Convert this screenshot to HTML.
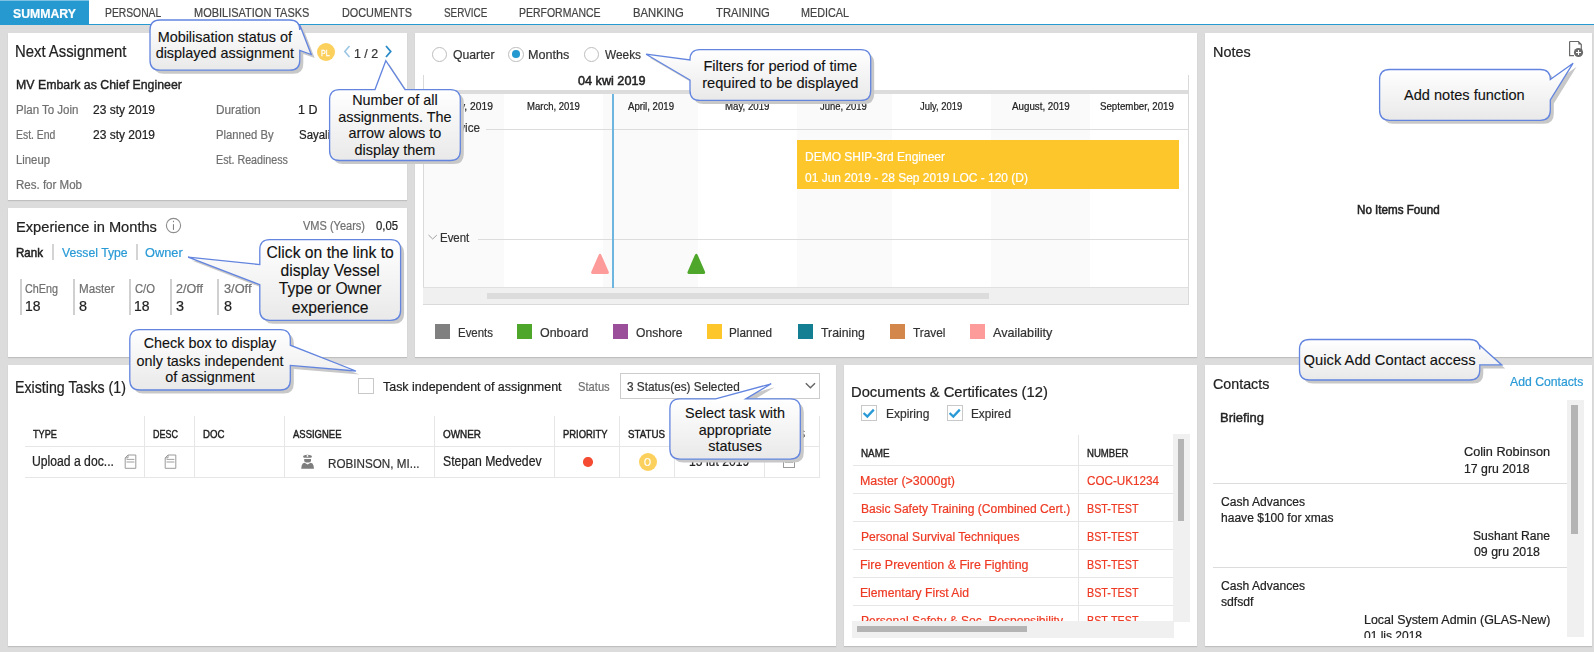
<!DOCTYPE html><html><head><meta charset="utf-8"><style>html,body{margin:0;padding:0;}body{width:1594px;height:652px;overflow:hidden;position:relative;background:#dcdcdc;font-family:"Liberation Sans",sans-serif;}.t{position:absolute;white-space:nowrap;line-height:1;transform-origin:0 0;-webkit-text-stroke-width:0.22px;}.r{position:absolute;}</style></head><body><div class="r" style="left:0.00px;top:0.00px;width:1594.00px;height:24.00px;background:#ffffff;z-index:0;"></div>
<div class="r" style="left:0.00px;top:24.00px;width:1594.00px;height:1.20px;background:#2699d0;z-index:0;"></div>
<div class="r" style="left:0.00px;top:0.00px;width:89.00px;height:24.00px;background:#2699d0;z-index:0;"></div>
<div class="r" style="left:0.00px;top:0.00px;width:89.00px;height:1.00px;background:#7dc1e5;z-index:0;"></div>
<div class="t" style="left:12.65px;top:7.00px;font-size:13.37px;color:#ffffff;font-weight:bold;transform:scaleX(0.9185);">SUMMARY</div>
<div class="t" style="left:104.65px;top:6.00px;font-size:13.37px;color:#444444;transform:scaleX(0.7730);">PERSONAL</div>
<div class="t" style="left:193.80px;top:6.00px;font-size:13.37px;color:#444444;transform:scaleX(0.8224);">MOBILISATION TASKS</div>
<div class="t" style="left:341.91px;top:6.00px;font-size:13.37px;color:#444444;transform:scaleX(0.8123);">DOCUMENTS</div>
<div class="t" style="left:444.05px;top:6.00px;font-size:13.37px;color:#444444;transform:scaleX(0.7406);">SERVICE</div>
<div class="t" style="left:519.24px;top:6.00px;font-size:13.37px;color:#444444;transform:scaleX(0.7845);">PERFORMANCE</div>
<div class="t" style="left:632.77px;top:6.00px;font-size:13.37px;color:#444444;transform:scaleX(0.8440);">BANKING</div>
<div class="t" style="left:715.95px;top:6.00px;font-size:13.37px;color:#444444;transform:scaleX(0.8436);">TRAINING</div>
<div class="t" style="left:801.21px;top:6.00px;font-size:13.37px;color:#444444;transform:scaleX(0.8075);">MEDICAL</div>
<div class="r" style="left:8.00px;top:33.00px;width:399.00px;height:167.00px;background:#ffffff;z-index:0;box-shadow:0 1px 1px rgba(0,0,0,0.13);"></div>
<div class="r" style="left:8.00px;top:208.00px;width:399.00px;height:149.00px;background:#ffffff;z-index:0;box-shadow:0 1px 1px rgba(0,0,0,0.13);"></div>
<div class="r" style="left:415.00px;top:33.00px;width:782.00px;height:324.00px;background:#ffffff;z-index:0;box-shadow:0 1px 1px rgba(0,0,0,0.13);"></div>
<div class="r" style="left:1205.00px;top:33.00px;width:387.00px;height:324.00px;background:#ffffff;z-index:0;box-shadow:0 1px 1px rgba(0,0,0,0.13);"></div>
<div class="r" style="left:8.00px;top:365.00px;width:828.00px;height:281.00px;background:#ffffff;z-index:0;box-shadow:0 1px 1px rgba(0,0,0,0.13);"></div>
<div class="r" style="left:844.00px;top:365.00px;width:353.00px;height:281.00px;background:#ffffff;z-index:0;box-shadow:0 1px 1px rgba(0,0,0,0.13);"></div>
<div class="r" style="left:1205.00px;top:365.00px;width:387.00px;height:281.00px;background:#ffffff;z-index:0;box-shadow:0 1px 1px rgba(0,0,0,0.13);"></div>
<div class="t" style="left:15.38px;top:44.00px;font-size:15.99px;color:#222222;transform:scaleX(0.9294);">Next Assignment</div>
<div class="r" style="left:317px;top:43px;width:18px;height:18px;border-radius:50%;background:#fcd05c;"></div>
<div class="t" style="left:321.12px;top:48.00px;font-size:9.74px;color:#ffffff;transform:scaleX(0.7304);-webkit-text-stroke-width:0.3px;">PL</div>
<svg class="r" style="left:0;top:0;" width="420" height="70"><path d="M349.5,46 L344.8,51.5 L349.5,57" fill="none" stroke="#9cc7e4" stroke-width="1.6"/><path d="M386,46 L390.7,51.5 L386,57" fill="none" stroke="#2a8ac8" stroke-width="1.8"/></svg>
<div class="t" style="left:354.36px;top:47.00px;font-size:13.52px;color:#333333;transform:scaleX(0.9163);">1 / 2</div>
<div class="t" style="left:15.59px;top:78.00px;font-size:13.23px;color:#222222;transform:scaleX(0.9331);-webkit-text-stroke-width:0.4px;">MV Embark as Chief Engineer</div>
<div class="t" style="left:15.56px;top:104.00px;font-size:12.21px;color:#707070;transform:scaleX(0.9428);">Plan To Join</div>
<div class="t" style="left:93.00px;top:104.00px;font-size:12.50px;color:#222222;transform:scaleX(0.9593);">23 sty 2019</div>
<div class="t" style="left:15.64px;top:129.00px;font-size:12.21px;color:#707070;transform:scaleX(0.8538);">Est. End</div>
<div class="t" style="left:93.00px;top:129.00px;font-size:12.50px;color:#222222;transform:scaleX(0.9593);">23 sty 2019</div>
<div class="t" style="left:15.57px;top:154.00px;font-size:12.21px;color:#707070;transform:scaleX(0.9273);">Lineup</div>
<div class="t" style="left:15.55px;top:179.00px;font-size:12.21px;color:#707070;transform:scaleX(0.9444);">Res. for Mob</div>
<div class="t" style="left:215.63px;top:104.00px;font-size:12.21px;color:#707070;transform:scaleX(0.9686);">Duration</div>
<div class="t" style="left:298.45px;top:104.00px;font-size:12.50px;color:#222222;transform:scaleX(0.9973);">1 D</div>
<div class="t" style="left:215.68px;top:129.00px;font-size:12.21px;color:#707070;transform:scaleX(0.9223);">Planned By</div>
<div class="t" style="left:298.88px;top:129.00px;font-size:12.50px;color:#222222;transform:scaleX(0.9157);">Sayali Shinde</div>
<div class="t" style="left:215.72px;top:154.00px;font-size:12.21px;color:#707070;transform:scaleX(0.8768);">Est. Readiness</div>
<div class="t" style="left:15.60px;top:219.00px;font-size:15.55px;color:#222222;transform:scaleX(0.9428);">Experience in Months</div>
<svg class="r" style="left:160px;top:212px;" width="28" height="28"><circle cx="13.5" cy="13.5" r="7.1" fill="none" stroke="#8d8d8d" stroke-width="1.1"/><path d="M13.45,12.2 L13.45,17.9 M13.45,8.8 L13.45,10.2" stroke="#7a7a7a" stroke-width="1"/></svg>
<div class="t" style="left:303.35px;top:220.00px;font-size:12.50px;color:#707070;transform:scaleX(0.8807);">VMS (Years)</div>
<div class="t" style="left:375.86px;top:220.00px;font-size:12.79px;color:#222222;transform:scaleX(0.8877);">0,05</div>
<div class="t" style="left:15.85px;top:246.00px;font-size:13.37px;color:#222222;transform:scaleX(0.8649);-webkit-text-stroke-width:0.55px;">Rank</div>
<div class="r" style="left:52.00px;top:244.00px;width:2.00px;height:16.40px;background:#d4d4d4;z-index:0;"></div>
<div class="t" style="left:62.25px;top:246.00px;font-size:13.37px;color:#2a9ad6;transform:scaleX(0.9142);">Vessel Type</div>
<div class="r" style="left:136.00px;top:244.00px;width:2.00px;height:16.40px;background:#d4d4d4;z-index:0;"></div>
<div class="t" style="left:145.39px;top:246.00px;font-size:13.37px;color:#2a9ad6;transform:scaleX(0.9572);">Owner</div>
<div class="r" style="left:19.90px;top:278.80px;width:2.00px;height:35.90px;background:#d0d0d0;z-index:0;"></div>
<div class="t" style="left:25.45px;top:283.00px;font-size:12.50px;color:#707070;transform:scaleX(0.8634);">ChEng</div>
<div class="t" style="left:24.94px;top:298.00px;font-size:15.26px;color:#222222;transform:scaleX(0.9130);">18</div>
<div class="r" style="left:72.70px;top:278.80px;width:2.00px;height:35.90px;background:#d0d0d0;z-index:0;"></div>
<div class="t" style="left:78.85px;top:283.00px;font-size:12.50px;color:#707070;transform:scaleX(0.9292);">Master</div>
<div class="t" style="left:78.77px;top:298.00px;font-size:15.26px;color:#222222;transform:scaleX(0.9425);">8</div>
<div class="r" style="left:128.80px;top:278.80px;width:2.00px;height:35.90px;background:#d0d0d0;z-index:0;"></div>
<div class="t" style="left:134.73px;top:283.00px;font-size:12.50px;color:#707070;transform:scaleX(0.9000);">C/O</div>
<div class="t" style="left:134.24px;top:298.00px;font-size:15.26px;color:#222222;transform:scaleX(0.9130);">18</div>
<div class="r" style="left:169.80px;top:278.80px;width:2.00px;height:35.90px;background:#d0d0d0;z-index:0;"></div>
<div class="t" style="left:176.07px;top:283.00px;font-size:12.50px;color:#707070;transform:scaleX(1.0049);">2/Off</div>
<div class="t" style="left:175.85px;top:298.00px;font-size:15.26px;color:#222222;transform:scaleX(0.9425);">3</div>
<div class="r" style="left:217.40px;top:278.80px;width:2.00px;height:35.90px;background:#d0d0d0;z-index:0;"></div>
<div class="t" style="left:224.01px;top:283.00px;font-size:12.50px;color:#707070;transform:scaleX(1.0236);">3/Off</div>
<div class="t" style="left:223.87px;top:298.00px;font-size:15.26px;color:#222222;transform:scaleX(0.9425);">8</div>
<div class="r" style="left:432.10px;top:46.50px;width:13.4px;height:13.4px;border-radius:50%;border:1px solid #bdbdbd;background:#fff;"></div>
<div class="t" style="left:452.72px;top:48.00px;font-size:13.37px;color:#333333;transform:scaleX(0.9154);">Quarter</div>
<div class="r" style="left:508.20px;top:46.50px;width:13.4px;height:13.4px;border-radius:50%;border:1px solid #bdbdbd;background:#fff;"></div>
<div class="t" style="left:528.26px;top:48.00px;font-size:13.37px;color:#333333;transform:scaleX(0.9441);">Months</div>
<div class="r" style="left:584.10px;top:46.50px;width:13.4px;height:13.4px;border-radius:50%;border:1px solid #bdbdbd;background:#fff;"></div>
<div class="t" style="left:605.15px;top:48.00px;font-size:13.37px;color:#333333;transform:scaleX(0.8861);">Weeks</div>
<div class="r" style="left:512.1px;top:50.4px;width:7.6px;height:7.6px;border-radius:50%;background:#2699d0;"></div>
<div class="r" style="left:423.00px;top:94.00px;width:765.00px;height:193.60px;background:#ffffff;z-index:0;"></div>
<div class="r" style="left:423.00px;top:94.00px;width:81.00px;height:193.60px;background:#fafafa;z-index:0;"></div>
<div class="r" style="left:603.00px;top:94.00px;width:95.00px;height:193.60px;background:#fafafa;z-index:0;"></div>
<div class="r" style="left:797.00px;top:94.00px;width:95.00px;height:193.60px;background:#fafafa;z-index:0;"></div>
<div class="r" style="left:991.00px;top:94.00px;width:99.00px;height:193.60px;background:#fafafa;z-index:0;"></div>
<div class="r" style="left:423.00px;top:90.00px;width:765.50px;height:4.00px;background:#dcdcdc;z-index:0;"></div>
<div class="r" style="left:422.50px;top:75.00px;width:1.20px;height:230.00px;background:#dadada;z-index:0;"></div>
<div class="r" style="left:1188.00px;top:75.00px;width:1.20px;height:230.00px;background:#dadada;z-index:0;"></div>
<div class="r" style="left:423.00px;top:287.60px;width:765.00px;height:16.90px;background:#f0f0f0;z-index:0;"></div>
<div class="r" style="left:423.00px;top:287.00px;width:765.00px;height:1.00px;background:#e0e0e0;z-index:0;"></div>
<div class="r" style="left:422.50px;top:304.00px;width:766.70px;height:1.20px;background:#dadada;z-index:0;"></div>
<div class="r" style="left:486.60px;top:292.70px;width:502.40px;height:6.10px;background:#dcdcdc;z-index:0;"></div>
<div class="t" style="left:577.81px;top:74.00px;font-size:13.08px;color:#222222;transform:scaleX(0.9668);-webkit-text-stroke-width:0.5px;">04 kwi 2019</div>
<div class="t" style="left:424.16px;top:102.00px;font-size:10.17px;color:#222222;transform:scaleX(1.0110);">February, 2019</div>
<div class="t" style="left:526.92px;top:102.00px;font-size:10.17px;color:#222222;transform:scaleX(0.9371);">March, 2019</div>
<div class="t" style="left:627.58px;top:102.00px;font-size:10.17px;color:#222222;transform:scaleX(0.9477);">April, 2019</div>
<div class="t" style="left:724.71px;top:102.00px;font-size:10.17px;color:#222222;transform:scaleX(0.9518);">May, 2019</div>
<div class="t" style="left:820.35px;top:102.00px;font-size:10.17px;color:#222222;transform:scaleX(0.9295);">June, 2019</div>
<div class="t" style="left:919.85px;top:102.00px;font-size:10.17px;color:#222222;transform:scaleX(0.9271);">July, 2019</div>
<div class="t" style="left:1011.98px;top:102.00px;font-size:10.17px;color:#222222;transform:scaleX(0.9622);">August, 2019</div>
<div class="t" style="left:1099.96px;top:102.00px;font-size:10.17px;color:#222222;transform:scaleX(0.9549);">September, 2019</div>
<svg class="r" style="left:0;top:0;" width="600" height="260"><path d="M428.5,125 L432.7,129 L436.9,125" fill="none" stroke="#a0a0a0" stroke-width="1"/><path d="M428.5,235 L432.7,239 L436.9,235" fill="none" stroke="#a0a0a0" stroke-width="1"/></svg>
<div class="t" style="left:440.87px;top:121.00px;font-size:13.08px;color:#333333;transform:scaleX(0.8941);">Service</div>
<div class="r" style="left:486.00px;top:129.00px;width:702.00px;height:1.20px;background:#dcdcdc;z-index:0;"></div>
<div class="t" style="left:440.46px;top:231.00px;font-size:13.08px;color:#333333;transform:scaleX(0.8759);">Event</div>
<div class="r" style="left:477.50px;top:238.80px;width:710.50px;height:1.20px;background:#dcdcdc;z-index:0;"></div>
<div class="r" style="left:797.00px;top:139.50px;width:382.00px;height:49.50px;background:#fdc62b;z-index:0;"></div>
<div class="t" style="left:804.52px;top:150.00px;font-size:13.52px;color:#ffffff;transform:scaleX(0.8874);">DEMO SHIP-3rd Engineer</div>
<div class="t" style="left:805.03px;top:171.00px;font-size:13.52px;color:#ffffff;transform:scaleX(0.8859);">01 Jun 2019 - 28 Sep 2019 LOC - 120 (D)</div>
<div class="r" style="left:612.00px;top:94.00px;width:1.60px;height:193.60px;background:#6cb6df;z-index:0;"></div>
<svg class="r" style="left:0;top:0;" width="800" height="300"><path d="M598.6,255 Q600,252.6 601.4,255 L608.6,271.4 Q609.6,274 607,274 L593,274 Q590.4,274 591.4,271.4 Z" fill="#fd9a9a"/><path d="M694.9,255 Q696.3,252.6 697.7,255 L704.9,271.4 Q705.9,274 703.3,274 L689.3,274 Q686.7,274 687.7,271.4 Z" fill="#4ea62a"/></svg>
<div class="r" style="left:434.90px;top:324.00px;width:15.00px;height:15.20px;background:#808080;z-index:0;"></div>
<div class="t" style="left:458.26px;top:326.00px;font-size:13.37px;color:#333333;transform:scaleX(0.8561);">Events</div>
<div class="r" style="left:517.20px;top:324.00px;width:15.00px;height:15.20px;background:#4ea62a;z-index:0;"></div>
<div class="t" style="left:539.81px;top:326.00px;font-size:13.37px;color:#333333;transform:scaleX(0.9320);">Onboard</div>
<div class="r" style="left:613.00px;top:324.00px;width:15.00px;height:15.20px;background:#9b4f9b;z-index:0;"></div>
<div class="t" style="left:635.93px;top:326.00px;font-size:13.37px;color:#333333;transform:scaleX(0.9066);">Onshore</div>
<div class="r" style="left:707.00px;top:324.00px;width:15.00px;height:15.20px;background:#fdc62b;z-index:0;"></div>
<div class="t" style="left:729.44px;top:326.00px;font-size:13.37px;color:#333333;transform:scaleX(0.8762);">Planned</div>
<div class="r" style="left:798.10px;top:324.00px;width:15.00px;height:15.20px;background:#147f93;z-index:0;"></div>
<div class="t" style="left:821.22px;top:326.00px;font-size:13.37px;color:#333333;transform:scaleX(0.9202);">Training</div>
<div class="r" style="left:890.30px;top:324.00px;width:15.00px;height:15.20px;background:#d4874a;z-index:0;"></div>
<div class="t" style="left:913.03px;top:326.00px;font-size:13.37px;color:#333333;transform:scaleX(0.8866);">Travel</div>
<div class="r" style="left:969.90px;top:324.00px;width:15.00px;height:15.20px;background:#fd9a9a;z-index:0;"></div>
<div class="t" style="left:993.38px;top:326.00px;font-size:13.37px;color:#333333;transform:scaleX(0.9439);">Availability</div>
<div class="t" style="left:1212.92px;top:44.00px;font-size:15.41px;color:#222222;transform:scaleX(0.9342);">Notes</div>
<svg class="r" style="left:1560px;top:36px;" width="30" height="28"><path d="M9.6,5.5 L18.4,5.5 L21.3,8.5 L21.3,14" fill="none" stroke="#6a6a6a" stroke-width="1.2"/><path d="M9.6,5.5 L9.6,19.6 L14,19.6" fill="none" stroke="#6a6a6a" stroke-width="1.2"/><path d="M18.4,5.5 L18.4,8.5 L21.3,8.5 Z" fill="#6a6a6a"/><circle cx="18.5" cy="16.5" r="4.6" fill="#6a6a6a"/><path d="M18.5,14 L18.5,19 M16,16.5 L21,16.5" stroke="#fff" stroke-width="1.1"/></svg>
<div class="t" style="left:1356.75px;top:204.00px;font-size:12.79px;color:#222222;transform:scaleX(0.9099);-webkit-text-stroke-width:0.55px;">No Items Found</div>
<div class="t" style="left:15.34px;top:380.00px;font-size:15.99px;color:#222222;transform:scaleX(0.8881);">Existing Tasks (1)</div>
<div class="r" style="left:358px;top:378.2px;width:13.8px;height:13.8px;border:1px solid #c8c8c8;background:#fff;"></div>
<div class="t" style="left:382.82px;top:380.00px;font-size:13.37px;color:#222222;transform:scaleX(0.9317);">Task independent of assignment</div>
<div class="t" style="left:577.69px;top:381.00px;font-size:12.79px;color:#707070;transform:scaleX(0.8742);">Status</div>
<div class="r" style="left:620.2px;top:373px;width:197.8px;height:23.6px;border:1px solid #cccccc;background:#fff;"></div>
<div class="t" style="left:627.25px;top:380.00px;font-size:13.37px;color:#333333;transform:scaleX(0.8823);">3 Status(es) Selected</div>
<svg class="r" style="left:0;top:0;" width="840" height="400"><path d="M805.8,383.2 L810.4,387.8 L815,383.2" fill="none" stroke="#666" stroke-width="1.4"/></svg>
<div class="r" style="left:144.00px;top:416.00px;width:1.00px;height:62.00px;background:#e6e6e6;z-index:0;"></div>
<div class="r" style="left:194.00px;top:416.00px;width:1.00px;height:62.00px;background:#e6e6e6;z-index:0;"></div>
<div class="r" style="left:284.00px;top:416.00px;width:1.00px;height:62.00px;background:#e6e6e6;z-index:0;"></div>
<div class="r" style="left:434.00px;top:416.00px;width:1.00px;height:62.00px;background:#e6e6e6;z-index:0;"></div>
<div class="r" style="left:554.00px;top:416.00px;width:1.00px;height:62.00px;background:#e6e6e6;z-index:0;"></div>
<div class="r" style="left:619.00px;top:416.00px;width:1.00px;height:62.00px;background:#e6e6e6;z-index:0;"></div>
<div class="r" style="left:674.00px;top:416.00px;width:1.00px;height:62.00px;background:#e6e6e6;z-index:0;"></div>
<div class="r" style="left:764.00px;top:416.00px;width:1.00px;height:62.00px;background:#e6e6e6;z-index:0;"></div>
<div class="r" style="left:25.00px;top:446.00px;width:795.00px;height:1.00px;background:#e6e6e6;z-index:0;"></div>
<div class="r" style="left:25.00px;top:477.00px;width:795.00px;height:1.00px;background:#e6e6e6;z-index:0;"></div>
<div class="t" style="left:33.19px;top:428.00px;font-size:11.63px;color:#222222;transform:scaleX(0.7902);-webkit-text-stroke-width:0.45px;">TYPE</div>
<div class="t" style="left:152.56px;top:428.00px;font-size:11.63px;color:#222222;transform:scaleX(0.7738);-webkit-text-stroke-width:0.45px;">DESC</div>
<div class="t" style="left:202.91px;top:428.00px;font-size:11.63px;color:#222222;transform:scaleX(0.8321);-webkit-text-stroke-width:0.45px;">DOC</div>
<div class="t" style="left:293.18px;top:428.00px;font-size:11.63px;color:#222222;transform:scaleX(0.8158);-webkit-text-stroke-width:0.45px;">ASSIGNEE</div>
<div class="t" style="left:442.93px;top:428.00px;font-size:11.63px;color:#222222;transform:scaleX(0.8526);-webkit-text-stroke-width:0.45px;">OWNER</div>
<div class="t" style="left:562.83px;top:428.00px;font-size:11.63px;color:#222222;transform:scaleX(0.8103);-webkit-text-stroke-width:0.45px;">PRIORITY</div>
<div class="t" style="left:627.66px;top:428.00px;font-size:11.63px;color:#222222;transform:scaleX(0.8381);-webkit-text-stroke-width:0.45px;">STATUS</div>
<div class="t" style="left:682.18px;top:428.00px;font-size:11.63px;color:#222222;transform:scaleX(0.8631);-webkit-text-stroke-width:0.45px;">DUE DATE</div>
<div class="t" style="left:775.15px;top:428.00px;font-size:11.63px;color:#222222;transform:scaleX(0.8930);-webkit-text-stroke-width:0.45px;">DOCS</div>
<div class="t" style="left:32.46px;top:455.00px;font-size:13.95px;color:#222222;transform:scaleX(0.8736);">Upload a doc...</div>
<svg class="r" style="left:123.5px;top:454px;" width="14" height="16"><path d="M4,1 L11.8,1 L11.8,14.3 L1.2,14.3 L1.2,3.8 Z" fill="#fff" stroke="#9a9a9a" stroke-width="1"/><path d="M1.2,3.8 L4,3.8 L4,1" fill="none" stroke="#9a9a9a" stroke-width="1"/><path d="M2.5,5.4 L10.4,5.4" stroke="#8a8a8a" stroke-width="0.8"/><path d="M2.5,8 L10.4,8" stroke="#c4c4c4" stroke-width="1.6"/></svg>
<svg class="r" style="left:163.5px;top:454px;" width="14" height="16"><path d="M4,1 L11.8,1 L11.8,14.3 L1.2,14.3 L1.2,3.8 Z" fill="#fff" stroke="#9a9a9a" stroke-width="1"/><path d="M1.2,3.8 L4,3.8 L4,1" fill="none" stroke="#9a9a9a" stroke-width="1"/><path d="M2.5,5.4 L10.4,5.4" stroke="#8a8a8a" stroke-width="0.8"/><path d="M2.5,8 L10.4,8" stroke="#c4c4c4" stroke-width="1.6"/></svg>
<svg class="r" style="left:300px;top:452px;" width="16" height="18"><path d="M3,3.9 Q7.5,1.4 12,3.9 L11.3,5.8 L3.7,5.8 Z" fill="#7d7d7d"/><circle cx="7.5" cy="3.9" r="0.9" fill="#fff"/><path d="M4.2,6.9 L11,6.9 L11,8.4 Q11,10.5 7.6,10.5 Q4.2,10.5 4.2,8.4 Z" fill="#7d7d7d"/><path d="M1.2,16.7 L1.7,13.6 Q2.3,11.1 4.6,10.8 L7.6,12.6 L10.6,10.8 Q12.9,11.1 13.5,13.6 L14,16.7 Z" fill="#7d7d7d"/></svg>
<div class="t" style="left:328.34px;top:457.00px;font-size:13.37px;color:#333333;transform:scaleX(0.8735);">ROBINSON, MI...</div>
<div class="t" style="left:442.84px;top:454.00px;font-size:14.10px;color:#222222;transform:scaleX(0.8675);">Stepan Medvedev</div>
<div class="r" style="left:583.3px;top:457.3px;width:9.4px;height:9.4px;border-radius:50%;background:#f44b32;"></div>
<div class="r" style="left:638.5px;top:452.6px;width:18.8px;height:18.8px;border-radius:50%;background:#fcd05c;"></div>
<div class="t" style="left:644.17px;top:458.00px;font-size:10.17px;color:#ffffff;transform:scaleX(0.8845);">O</div>
<div class="t" style="left:689.27px;top:455.00px;font-size:13.95px;color:#222222;transform:scaleX(0.8732);">15 lut 2019</div>
<div class="r" style="left:783.2px;top:458.7px;width:9.6px;height:7.8px;border:1px solid #9a9a9a;background:#fff;"></div>
<div class="r" style="left:785.00px;top:461.00px;width:7.80px;height:1.60px;background:#b0b0b0;z-index:0;"></div>
<div class="r" style="left:819.00px;top:416.00px;width:1.00px;height:62.00px;background:#e6e6e6;z-index:0;"></div>
<div class="t" style="left:851.19px;top:384.00px;font-size:15.26px;color:#222222;transform:scaleX(0.9678);">Documents &amp; Certificates (12)</div>
<div class="r" style="left:860.9px;top:405.1px;width:14px;height:13.5px;border:1px solid #c8c8c8;background:#fff;"></div>
<svg class="r" style="left:860.9px;top:405.1px;" width="16" height="16"><path d="M2.6,8 L6.3,11.6 L12.8,4.6" fill="none" stroke="#2a9ad6" stroke-width="2.3"/></svg>
<div class="r" style="left:947px;top:405.1px;width:14px;height:13.5px;border:1px solid #c8c8c8;background:#fff;"></div>
<svg class="r" style="left:947px;top:405.1px;" width="16" height="16"><path d="M2.6,8 L6.3,11.6 L12.8,4.6" fill="none" stroke="#2a9ad6" stroke-width="2.3"/></svg>
<div class="t" style="left:885.81px;top:407.00px;font-size:13.08px;color:#333333;transform:scaleX(0.9183);">Expiring</div>
<div class="t" style="left:971.33px;top:407.00px;font-size:13.08px;color:#333333;transform:scaleX(0.9018);">Expired</div>
<div class="r" style="left:852.8px;top:435px;width:320px;height:186px;overflow:hidden;background:#fff;">
<div class="t" style="left:7.79px;top:13.00px;font-size:11.05px;color:#222222;transform:scaleX(0.8930);-webkit-text-stroke-width:0.4px;">NAME</div>
<div class="t" style="left:233.91px;top:13.00px;font-size:11.05px;color:#222222;transform:scaleX(0.8669);-webkit-text-stroke-width:0.4px;">NUMBER</div>
<div class="r" style="left:225.2px;top:0;width:1px;height:186px;background:#e6e6e6;"></div>
<div class="r" style="left:0;top:30px;width:320px;height:1px;background:#e6e6e6;"></div>
<div class="t" style="left:7.68px;top:39.00px;font-size:13.08px;color:#ee3a24;transform:scaleX(0.9502);">Master (&gt;3000gt)</div>
<div class="t" style="left:234.11px;top:39.00px;font-size:13.08px;color:#ee3a24;transform:scaleX(0.8922);">COC-UK1234</div>
<div class="r" style="left:0;top:58px;width:320px;height:1px;background:#e6e6e6;"></div>
<div class="t" style="left:7.71px;top:67.00px;font-size:13.08px;color:#ee3a24;transform:scaleX(0.9227);">Basic Safety Training (Combined Cert.)</div>
<div class="t" style="left:233.82px;top:67.00px;font-size:13.08px;color:#ee3a24;transform:scaleX(0.8239);">BST-TEST</div>
<div class="r" style="left:0;top:86px;width:320px;height:1px;background:#e6e6e6;"></div>
<div class="t" style="left:7.71px;top:95.00px;font-size:13.08px;color:#ee3a24;transform:scaleX(0.9249);">Personal Survival Techniques</div>
<div class="t" style="left:233.82px;top:95.00px;font-size:13.08px;color:#ee3a24;transform:scaleX(0.8239);">BST-TEST</div>
<div class="r" style="left:0;top:114px;width:320px;height:1px;background:#e6e6e6;"></div>
<div class="t" style="left:7.68px;top:123.00px;font-size:13.08px;color:#ee3a24;transform:scaleX(0.9498);">Fire Prevention &amp; Fire Fighting</div>
<div class="t" style="left:233.82px;top:123.00px;font-size:13.08px;color:#ee3a24;transform:scaleX(0.8239);">BST-TEST</div>
<div class="r" style="left:0;top:142px;width:320px;height:1px;background:#e6e6e6;"></div>
<div class="t" style="left:7.70px;top:151.00px;font-size:13.08px;color:#ee3a24;transform:scaleX(0.9313);">Elementary First Aid</div>
<div class="t" style="left:233.82px;top:151.00px;font-size:13.08px;color:#ee3a24;transform:scaleX(0.8239);">BST-TEST</div>
<div class="r" style="left:0;top:170px;width:320px;height:1px;background:#e6e6e6;"></div>
<div class="t" style="left:7.71px;top:179.00px;font-size:13.08px;color:#ee3a24;transform:scaleX(0.9230);">Personal Safety &amp; Soc. Responsibility</div>
<div class="t" style="left:233.82px;top:179.00px;font-size:13.08px;color:#ee3a24;transform:scaleX(0.8239);">BST-TEST</div>
</div>
<div class="r" style="left:1172.70px;top:434.10px;width:17.30px;height:187.70px;background:#f0f0f0;z-index:0;"></div>
<div class="r" style="left:1178.00px;top:439.20px;width:6.00px;height:81.80px;background:#b4b4b4;z-index:0;"></div>
<div class="r" style="left:852.20px;top:621.00px;width:321.80px;height:16.80px;background:#f0f0f0;z-index:0;"></div>
<div class="r" style="left:857.00px;top:626.20px;width:170.00px;height:5.80px;background:#b4b4b4;z-index:0;"></div>
<div class="t" style="left:1212.88px;top:377.00px;font-size:14.97px;color:#222222;transform:scaleX(0.9529);">Contacts</div>
<div class="t" style="left:1510.28px;top:375.00px;font-size:13.37px;color:#2a9ad6;transform:scaleX(0.9143);">Add Contacts</div>
<div class="r" style="left:1566.60px;top:399.70px;width:17.60px;height:237.70px;background:#f0f0f0;z-index:0;"></div>
<div class="r" style="left:1571.30px;top:404.80px;width:7.00px;height:129.00px;background:#b4b4b4;z-index:0;"></div>
<div class="r" style="left:1212.8px;top:399.7px;width:353.8px;height:238.6px;overflow:hidden;">
<div class="t" style="left:7.54px;top:12.00px;font-size:12.79px;color:#222222;transform:scaleX(1.0145);-webkit-text-stroke-width:0.4px;">Briefing</div>
<div class="t" style="left:251.56px;top:45.00px;font-size:13.08px;color:#222222;transform:scaleX(0.9694);">Colin Robinson</div>
<div class="t" style="left:251.26px;top:62.00px;font-size:13.08px;color:#222222;transform:scaleX(0.9394);">17 gru 2018</div>
<div class="r" style="left:0;top:83.30px;width:353.8px;height:1px;background:#dcdcdc;"></div>
<div class="t" style="left:7.99px;top:95.00px;font-size:13.08px;color:#222222;transform:scaleX(0.9241);">Cash Advances</div>
<div class="t" style="left:7.76px;top:111.00px;font-size:13.08px;color:#222222;transform:scaleX(0.9217);">haave $100 for xmas</div>
<div class="t" style="left:260.65px;top:129.00px;font-size:13.08px;color:#222222;transform:scaleX(0.9287);">Sushant Rane</div>
<div class="t" style="left:260.72px;top:145.00px;font-size:13.08px;color:#222222;transform:scaleX(0.9452);">09 gru 2018</div>
<div class="r" style="left:0;top:167.30px;width:353.8px;height:1px;background:#dcdcdc;"></div>
<div class="t" style="left:7.99px;top:179.00px;font-size:13.08px;color:#222222;transform:scaleX(0.9241);">Cash Advances</div>
<div class="t" style="left:8.26px;top:195.00px;font-size:13.08px;color:#222222;transform:scaleX(0.9312);">sdfsdf</div>
<div class="t" style="left:150.98px;top:213.00px;font-size:13.08px;color:#222222;transform:scaleX(0.9501);">Local System Admin (GLAS-New)</div>
<div class="t" style="left:151.53px;top:229.00px;font-size:13.08px;color:#222222;transform:scaleX(0.9166);">01 lis 2018</div>
</div>
<div class="t" style="left:157.67px;top:30.00px;font-size:14.40px;color:#111;z-index:20;-webkit-text-stroke-width:0.12px;">Mobilisation status of</div>
<div class="t" style="left:155.66px;top:46.00px;font-size:14.40px;color:#111;z-index:20;-webkit-text-stroke-width:0.12px;">displayed assignment</div>
<div class="t" style="left:352.13px;top:93.00px;font-size:14.40px;color:#111;z-index:20;-webkit-text-stroke-width:0.12px;">Number of all</div>
<div class="t" style="left:338.25px;top:110.00px;font-size:14.40px;color:#111;z-index:20;-webkit-text-stroke-width:0.12px;">assignments. The</div>
<div class="t" style="left:348.53px;top:126.00px;font-size:14.40px;color:#111;z-index:20;-webkit-text-stroke-width:0.12px;">arrow alows to</div>
<div class="t" style="left:354.53px;top:143.00px;font-size:14.40px;color:#111;z-index:20;-webkit-text-stroke-width:0.12px;">display them</div>
<div class="t" style="left:266.50px;top:245.00px;font-size:15.70px;color:#111;z-index:20;-webkit-text-stroke-width:0.12px;">Click on the link to</div>
<div class="t" style="left:280.45px;top:263.00px;font-size:15.70px;color:#111;z-index:20;-webkit-text-stroke-width:0.12px;">display Vessel</div>
<div class="t" style="left:278.72px;top:281.00px;font-size:15.70px;color:#111;z-index:20;-webkit-text-stroke-width:0.12px;">Type or Owner</div>
<div class="t" style="left:291.80px;top:300.00px;font-size:15.70px;color:#111;z-index:20;-webkit-text-stroke-width:0.12px;">experience</div>
<div class="t" style="left:143.75px;top:336.00px;font-size:14.37px;color:#111;z-index:20;-webkit-text-stroke-width:0.12px;">Check box to display</div>
<div class="t" style="left:136.55px;top:354.00px;font-size:14.37px;color:#111;z-index:20;-webkit-text-stroke-width:0.12px;">only tasks independent</div>
<div class="t" style="left:165.32px;top:370.00px;font-size:14.37px;color:#111;z-index:20;-webkit-text-stroke-width:0.12px;">of assignment</div>
<div class="t" style="left:685.08px;top:406.00px;font-size:14.40px;color:#111;z-index:20;-webkit-text-stroke-width:0.12px;">Select task with</div>
<div class="t" style="left:698.67px;top:423.00px;font-size:14.40px;color:#111;z-index:20;-webkit-text-stroke-width:0.12px;">appropriate</div>
<div class="t" style="left:708.29px;top:439.00px;font-size:14.40px;color:#111;z-index:20;-webkit-text-stroke-width:0.12px;">statuses</div>
<div class="t" style="left:1303.62px;top:353.00px;font-size:14.74px;color:#111;z-index:20;-webkit-text-stroke-width:0.12px;">Quick Add Contact access</div>
<div class="t" style="left:1404.09px;top:88.00px;font-size:14.55px;color:#111;z-index:20;-webkit-text-stroke-width:0.12px;">Add notes function</div>
<div class="t" style="left:703.42px;top:59.00px;font-size:14.63px;color:#111;z-index:20;-webkit-text-stroke-width:0.12px;">Filters for period of time</div>
<div class="t" style="left:702.17px;top:76.00px;font-size:14.63px;color:#111;z-index:20;-webkit-text-stroke-width:0.12px;">required to be displayed</div>
<svg class="r" style="left:0;top:0;z-index:10;" width="1594" height="652">
<defs><filter id="bl" x="-10%" y="-10%" width="120%" height="120%"><feGaussianBlur stdDeviation="0.5"/></filter>
<linearGradient id="g0" gradientUnits="userSpaceOnUse" x1="0" y1="20" x2="0" y2="70.2"><stop offset="0" stop-color="#ffffff"/><stop offset="1" stop-color="#e9e9e9"/></linearGradient>
<linearGradient id="g1" gradientUnits="userSpaceOnUse" x1="0" y1="89.6" x2="0" y2="160.5"><stop offset="0" stop-color="#ffffff"/><stop offset="1" stop-color="#e9e9e9"/></linearGradient>
<linearGradient id="g2" gradientUnits="userSpaceOnUse" x1="0" y1="239.7" x2="0" y2="320.3"><stop offset="0" stop-color="#ffffff"/><stop offset="1" stop-color="#e9e9e9"/></linearGradient>
<linearGradient id="g3" gradientUnits="userSpaceOnUse" x1="0" y1="329.7" x2="0" y2="390"><stop offset="0" stop-color="#ffffff"/><stop offset="1" stop-color="#e9e9e9"/></linearGradient>
<linearGradient id="g4" gradientUnits="userSpaceOnUse" x1="0" y1="398.9" x2="0" y2="459.1"><stop offset="0" stop-color="#ffffff"/><stop offset="1" stop-color="#e9e9e9"/></linearGradient>
<linearGradient id="g5" gradientUnits="userSpaceOnUse" x1="0" y1="339.5" x2="0" y2="380"><stop offset="0" stop-color="#ffffff"/><stop offset="1" stop-color="#e9e9e9"/></linearGradient>
<linearGradient id="g6" gradientUnits="userSpaceOnUse" x1="0" y1="69.5" x2="0" y2="120.3"><stop offset="0" stop-color="#ffffff"/><stop offset="1" stop-color="#e9e9e9"/></linearGradient>
<linearGradient id="g7" gradientUnits="userSpaceOnUse" x1="0" y1="49.7" x2="0" y2="100.4"><stop offset="0" stop-color="#ffffff"/><stop offset="1" stop-color="#e9e9e9"/></linearGradient>
</defs>
<path d="M160.00,20.00 L289.80,20.00 Q299.80,20.00 299.80,30.00 L299.80,25.00 L311.20,54.50 L299.80,50.40 L299.80,60.20 Q299.80,70.20 289.80,70.20 L160.00,70.20 Q150.00,70.20 150.00,60.20 L150.00,30.00 Q150.00,20.00 160.00,20.00 Z" transform="translate(3.5,3.5)" fill="#c8c8c8" opacity="1" filter="url(#bl)"/>
<path d="M160.00,20.00 L289.80,20.00 Q299.80,20.00 299.80,30.00 L299.80,25.00 L311.20,54.50 L299.80,50.40 L299.80,60.20 Q299.80,70.20 289.80,70.20 L160.00,70.20 Q150.00,70.20 150.00,60.20 L150.00,30.00 Q150.00,20.00 160.00,20.00 Z" fill="url(#g0)" stroke="#6385df" stroke-width="1.3" stroke-linejoin="miter"/>
<path d="M339.60,89.60 L375.00,89.60 L385.80,60.70 L405.00,89.60 L450.30,89.60 Q460.30,89.60 460.30,99.60 L460.30,150.50 Q460.30,160.50 450.30,160.50 L339.60,160.50 Q329.60,160.50 329.60,150.50 L329.60,99.60 Q329.60,89.60 339.60,89.60 Z" transform="translate(3.5,3.5)" fill="#c8c8c8" opacity="1" filter="url(#bl)"/>
<path d="M339.60,89.60 L375.00,89.60 L385.80,60.70 L405.00,89.60 L450.30,89.60 Q460.30,89.60 460.30,99.60 L460.30,150.50 Q460.30,160.50 450.30,160.50 L339.60,160.50 Q329.60,160.50 329.60,150.50 L329.60,99.60 Q329.60,89.60 339.60,89.60 Z" fill="url(#g1)" stroke="#6385df" stroke-width="1.3" stroke-linejoin="miter"/>
<path d="M269.80,239.70 L390.60,239.70 Q400.60,239.70 400.60,249.70 L400.60,310.30 Q400.60,320.30 390.60,320.30 L269.80,320.30 Q259.80,320.30 259.80,310.30 L259.80,284.70 L188.10,257.10 L259.80,264.60 L259.80,249.70 Q259.80,239.70 269.80,239.70 Z" transform="translate(3.5,3.5)" fill="#c8c8c8" opacity="1" filter="url(#bl)"/>
<path d="M269.80,239.70 L390.60,239.70 Q400.60,239.70 400.60,249.70 L400.60,310.30 Q400.60,320.30 390.60,320.30 L269.80,320.30 Q259.80,320.30 259.80,310.30 L259.80,284.70 L188.10,257.10 L259.80,264.60 L259.80,249.70 Q259.80,239.70 269.80,239.70 Z" fill="url(#g2)" stroke="#6385df" stroke-width="1.3" stroke-linejoin="miter"/>
<path d="M139.80,329.70 L280.30,329.70 Q290.30,329.70 290.30,339.70 L290.30,345.20 L355.90,371.00 L290.30,365.40 L290.30,380.00 Q290.30,390.00 280.30,390.00 L139.80,390.00 Q129.80,390.00 129.80,380.00 L129.80,339.70 Q129.80,329.70 139.80,329.70 Z" transform="translate(3.5,3.5)" fill="#c8c8c8" opacity="1" filter="url(#bl)"/>
<path d="M139.80,329.70 L280.30,329.70 Q290.30,329.70 290.30,339.70 L290.30,345.20 L355.90,371.00 L290.30,365.40 L290.30,380.00 Q290.30,390.00 280.30,390.00 L139.80,390.00 Q129.80,390.00 129.80,380.00 L129.80,339.70 Q129.80,329.70 139.80,329.70 Z" fill="url(#g3)" stroke="#6385df" stroke-width="1.3" stroke-linejoin="miter"/>
<path d="M679.90,398.90 L715.60,398.90 L771.20,383.80 L745.70,398.90 L790.30,398.90 Q800.30,398.90 800.30,408.90 L800.30,449.10 Q800.30,459.10 790.30,459.10 L679.90,459.10 Q669.90,459.10 669.90,449.10 L669.90,408.90 Q669.90,398.90 679.90,398.90 Z" transform="translate(3.5,3.5)" fill="#c8c8c8" opacity="1" filter="url(#bl)"/>
<path d="M679.90,398.90 L715.60,398.90 L771.20,383.80 L745.70,398.90 L790.30,398.90 Q800.30,398.90 800.30,408.90 L800.30,449.10 Q800.30,459.10 790.30,459.10 L679.90,459.10 Q669.90,459.10 669.90,449.10 L669.90,408.90 Q669.90,398.90 679.90,398.90 Z" fill="url(#g4)" stroke="#6385df" stroke-width="1.3" stroke-linejoin="miter"/>
<path d="M1309.50,339.50 L1469.80,339.50 Q1479.80,339.50 1479.80,349.50 L1479.80,345.30 L1501.70,364.90 L1479.80,364.90 L1479.80,370.00 Q1479.80,380.00 1469.80,380.00 L1309.50,380.00 Q1299.50,380.00 1299.50,370.00 L1299.50,349.50 Q1299.50,339.50 1309.50,339.50 Z" transform="translate(3.5,3.5)" fill="#c8c8c8" opacity="1" filter="url(#bl)"/>
<path d="M1309.50,339.50 L1469.80,339.50 Q1479.80,339.50 1479.80,349.50 L1479.80,345.30 L1501.70,364.90 L1479.80,364.90 L1479.80,370.00 Q1479.80,380.00 1469.80,380.00 L1309.50,380.00 Q1299.50,380.00 1299.50,370.00 L1299.50,349.50 Q1299.50,339.50 1309.50,339.50 Z" fill="url(#g5)" stroke="#6385df" stroke-width="1.3" stroke-linejoin="miter"/>
<path d="M1389.60,69.50 L1540.30,69.50 Q1550.30,69.50 1550.30,79.50 L1550.30,79.60 L1573.10,63.20 L1550.30,100.00 L1550.30,110.30 Q1550.30,120.30 1540.30,120.30 L1389.60,120.30 Q1379.60,120.30 1379.60,110.30 L1379.60,79.50 Q1379.60,69.50 1389.60,69.50 Z" transform="translate(3.5,3.5)" fill="#c8c8c8" opacity="1" filter="url(#bl)"/>
<path d="M1389.60,69.50 L1540.30,69.50 Q1550.30,69.50 1550.30,79.50 L1550.30,79.60 L1573.10,63.20 L1550.30,100.00 L1550.30,110.30 Q1550.30,120.30 1540.30,120.30 L1389.60,120.30 Q1379.60,120.30 1379.60,110.30 L1379.60,79.50 Q1379.60,69.50 1389.60,69.50 Z" fill="url(#g6)" stroke="#6385df" stroke-width="1.3" stroke-linejoin="miter"/>
<path d="M700.00,49.70 L860.70,49.70 Q870.70,49.70 870.70,59.70 L870.70,90.40 Q870.70,100.40 860.70,100.40 L700.00,100.40 Q690.00,100.40 690.00,90.40 L690.00,80.00 L646.10,54.20 L690.00,59.90 L690.00,59.70 Q690.00,49.70 700.00,49.70 Z" transform="translate(3.5,3.5)" fill="#c8c8c8" opacity="1" filter="url(#bl)"/>
<path d="M700.00,49.70 L860.70,49.70 Q870.70,49.70 870.70,59.70 L870.70,90.40 Q870.70,100.40 860.70,100.40 L700.00,100.40 Q690.00,100.40 690.00,90.40 L690.00,80.00 L646.10,54.20 L690.00,59.90 L690.00,59.70 Q690.00,49.70 700.00,49.70 Z" fill="url(#g7)" stroke="#6385df" stroke-width="1.3" stroke-linejoin="miter"/>
</svg>
</body></html>
